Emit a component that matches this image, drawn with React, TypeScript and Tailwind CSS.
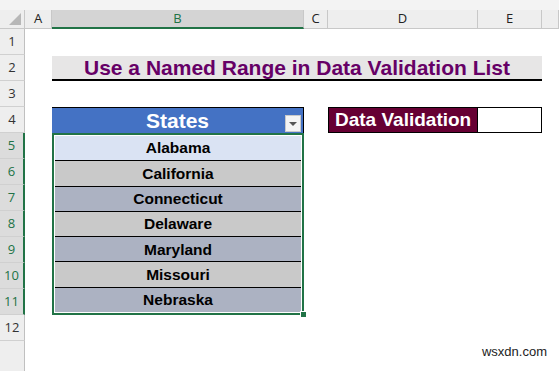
const cols = ['A', 'B', 'C', 'D', 'E', ''];
const colStart = ['col-start-2', 'col-start-3', 'col-start-4', 'col-start-5', 'col-start-6', 'col-start-7'];
const rowStart = [
  'row-start-3', 'row-start-4', 'row-start-5', 'row-start-6', 'row-start-7', 'row-start-8',
  'row-start-9', 'row-start-10', 'row-start-11', 'row-start-12', 'row-start-13', 'row-start-14',
];

const states = [
  { name: 'Alabama', bg: 'bg-[#dae3f3]' },
  { name: 'California', bg: 'bg-[#c9c9c9]' },
  { name: 'Connecticut', bg: 'bg-[#acb2c2]' },
  { name: 'Delaware', bg: 'bg-[#c9c9c9]' },
  { name: 'Maryland', bg: 'bg-[#acb2c2]' },
  { name: 'Missouri', bg: 'bg-[#c9c9c9]' },
  { name: 'Nebraska', bg: 'bg-[#acb2c2]' },
];

export default function App() {
  return (
    <div className="relative w-[559px] h-[371px] overflow-hidden bg-white font-['Liberation_Sans',Arial,sans-serif]">
      <div className="grid h-full grid-cols-[25px_27px_252px_24px_150px_64px_1fr] grid-rows-[10px_19px_repeat(12,26px)_1fr]">
        {/* top strip */}
        <div className="col-span-full row-start-1 bg-[#f3f3f3]" />

        {/* select-all corner */}
        <div className="col-start-1 row-start-2 relative bg-[#eeeeee] border-r border-b border-[#c8c8c8]">
          <div className="absolute right-[3px] bottom-[3px] w-0 h-0 border-l-[12px] border-l-transparent border-b-[12px] border-b-[#b7b7b7]" />
        </div>

        {/* column headers */}
        {cols.map((c, i) => {
          const active = c === 'B';
          return (
            <div
              key={i}
              className={`${colStart[i]} row-start-2 flex items-center justify-center text-[13px] font-['Open_Sans',sans-serif] ${
                active
                  ? 'bg-[#d4d4d4] text-[#217346] border-b-2 border-b-[#217346] border-r border-r-[#c8c8c8]'
                  : 'bg-[#eeeeee] text-[#222] border-b border-b-[#c8c8c8] border-r border-r-[#c8c8c8]'
              }`}
            >
              {c}
            </div>
          );
        })}

        {/* row headers */}
        {rowStart.map((r, i) => {
          const n = i + 1;
          const active = n >= 5 && n <= 11;
          return (
            <div
              key={r}
              className={`col-start-1 ${r} flex items-center justify-center pt-[1px] text-[13px] font-['Open_Sans',sans-serif] border-b border-b-[#d0d0d0] ${
                active
                  ? 'bg-[#dcdcdc] text-[#217346] border-r-2 border-r-[#217346]'
                  : 'bg-[#eeeeee] text-[#333] border-r border-r-[#c0c0c0]'
              }`}
            >
              {n}
            </div>
          );
        })}
        <div className="col-start-1 row-start-15 bg-[#eeeeee] border-r border-r-[#c0c0c0]" />

        {/* title */}
        <div className="col-start-3 col-span-4 row-start-4 mt-[1px] flex items-center justify-center bg-[#e7e6e6] border-b-2 border-black text-[21px] font-bold text-[#660066]">
          Use a Named Range in Data Validation List
        </div>

        {/* States header */}
        <div className="col-start-3 row-start-6 relative flex items-center justify-center bg-[#4472c4] border-t border-r border-black text-[21px] font-bold text-white">
          States
          <div className="absolute right-[2px] bottom-[1px] w-[16px] h-[17px] bg-[#f4f4f4] border border-[#c9c9c9] flex items-center justify-center">
            <div className="w-0 h-0 border-l-[4px] border-r-[4px] border-t-[4px] border-l-transparent border-r-transparent border-t-[#555]" />
          </div>
        </div>

        {/* Data Validation */}
        <div className="col-start-5 row-start-6 flex items-center pl-[6px] bg-[#660033] border border-black text-[19px] font-bold text-white">
          Data Validation
        </div>
        <div className="col-start-6 row-start-6 bg-white border border-l-0 border-black" />

        {/* states list with selection border */}
        <div className="col-start-3 row-start-7 row-span-7 relative min-h-0 border-2 border-[#217346] p-[1px] flex flex-col">
          {states.map((s, i) => (
            <div
              key={s.name}
              className={`${s.bg} flex-1 min-h-0 flex items-center justify-center leading-none text-[15.5px] font-bold text-black ${
                i < states.length - 1 ? 'border-b border-black' : ''
              }`}
            >
              {s.name}
            </div>
          ))}
          <div className="absolute -right-[5px] -bottom-[5px] w-[7px] h-[7px] bg-[#217346] border border-white" />
        </div>
      </div>

      <div className="absolute right-[10px] bottom-[10px] bg-white px-[2px] text-[13px] text-[#222] font-['Liberation_Sans',sans-serif]">
        wsxdn.com
      </div>
    </div>
  );
}
